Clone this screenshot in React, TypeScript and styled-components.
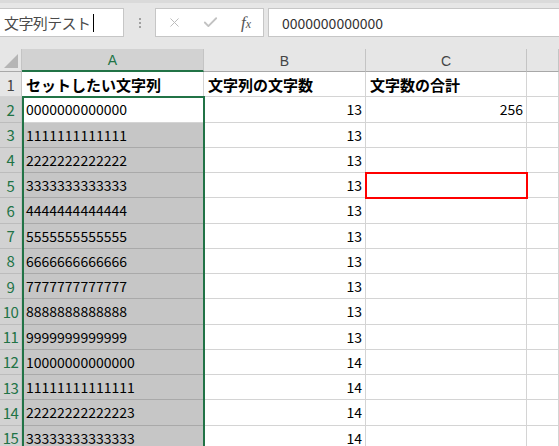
import React from 'react';
import styled, { createGlobalStyle } from 'styled-components';
import { X, Check } from 'lucide-react';

const GlobalStyle = createGlobalStyle`
    body {
        margin: 0;
        background: #ffffff;
        overflow: hidden;
        font-family: "Noto Sans CJK JP", "Noto Sans", sans-serif;
    }
`;

const ROW_H = 25.25;

const columnA = [
    '0000000000000',
    '1111111111111',
    '2222222222222',
    '3333333333333',
    '4444444444444',
    '5555555555555',
    '6666666666666',
    '7777777777777',
    '8888888888888',
    '9999999999999',
    '10000000000000',
    '11111111111111',
    '22222222222223',
    '33333333333333',
];

export default function App() {
    return (
        <Page>
            <GlobalStyle />
            <Toolbar>
                <NameBox>
                    文字列テスト<Caret />
                </NameBox>
                <Grip>
                    <Dot /><Dot /><Dot />
                </Grip>
                <ButtonBox>
                    <IconSlot><X size={15} strokeWidth={1.6} color="#bcbcbc" /></IconSlot>
                    <IconSlot><Check size={17} strokeWidth={2.6} color="#c2c2c2" /></IconSlot>
                    <IconSlot><Fx>f<sub>x</sub></Fx></IconSlot>
                </ButtonBox>
                <FormulaBar>0000000000000</FormulaBar>
            </Toolbar>

            <Sheet>
                <Corner><Triangle /></Corner>
                <ColHeader $selected>A</ColHeader>
                <ColHeader>B</ColHeader>
                <ColHeader>C</ColHeader>
                <ColHeader />

                <RowHeader>1</RowHeader>
                <Cell $bold>セットしたい文字列</Cell>
                <Cell $bold>文字列の文字数</Cell>
                <Cell $bold>文字数の合計</Cell>
                <Cell />

                {columnA.map((value, i) => (
                    <React.Fragment key={i}>
                        <RowHeader $selected>{i + 2}</RowHeader>
                        <Cell $inRange={i > 0}>{value}</Cell>
                        <Cell $right>{value.length}</Cell>
                        <Cell $right $marked={i === 3}>{i === 0 ? '256' : ''}</Cell>
                        <Cell />
                    </React.Fragment>
                ))}

                <Selection />
            </Sheet>
        </Page>
    );
}

const Page = styled.div`
    width: 559px;
    height: 446px;
    overflow: hidden;
    background: #ffffff;
`;

const Toolbar = styled.div`
    height: 49px;
    box-sizing: border-box;
    background: #e6e6e6;
    border-top: 3px solid #dadada;
    padding-top: 5px;
    display: flex;
    align-items: flex-start;
`;

const NameBox = styled.div`
    width: 125px;
    height: 29px;
    margin-left: -1px;
    box-sizing: border-box;
    background: #ffffff;
    border: 1px solid #c6c6c6;
    padding-left: 4px;
    display: flex;
    align-items: center;
    font-size: 15px;
    color: #4a4a4a;
    letter-spacing: -0.6px;
`;

const Caret = styled.span`
    display: inline-block;
    width: 1px;
    height: 18px;
    margin-left: 3px;
    background: #000000;
`;

const Grip = styled.div`
    width: 31px;
    height: 29px;
    display: flex;
    flex-direction: column;
    align-items: center;
    justify-content: center;
    gap: 2px;
`;

const Dot = styled.span`
    width: 2px;
    height: 2px;
    background: #a0a0a0;
`;

const ButtonBox = styled.div`
    width: 109px;
    height: 29px;
    box-sizing: border-box;
    background: #ffffff;
    border: 1px solid #c6c6c6;
    display: grid;
    grid-template-columns: repeat(3, 36px);
`;

const IconSlot = styled.div`
    display: flex;
    align-items: center;
    justify-content: center;
`;

const Fx = styled.span`
    font-family: "Liberation Serif", serif;
    font-style: italic;
    font-size: 17px;
    color: #555555;
    line-height: 1;

    sub {
        font-size: 12px;
        vertical-align: baseline;
        position: relative;
        top: 0px;
    }
`;

const FormulaBar = styled.div`
    flex: 1;
    height: 29px;
    margin-left: 4px;
    margin-right: -2px;
    box-sizing: border-box;
    background: #ffffff;
    border: 1px solid #c6c6c6;
    padding-left: 13px;
    display: flex;
    align-items: center;
    font-size: 14px;
    color: #333333;
`;

const Sheet = styled.div`
    position: relative;
    display: grid;
    grid-template-columns: 22px 182px 162px 161px 1fr;
    grid-template-rows: 23px repeat(15, ${ROW_H}px);
`;

const Corner = styled.div`
    position: relative;
    background: #e6e6e6;
    border-right: 1px solid #c4c4c4;
    border-bottom: 1px solid #a8a8a8;
    box-sizing: border-box;
`;

const Triangle = styled.div`
    position: absolute;
    right: 3px;
    bottom: 3px;
    width: 0;
    height: 0;
    border-left: 14px solid transparent;
    border-bottom: 14px solid #b5b5b5;
`;

const ColHeader = styled.div<{ $selected?: boolean }>`
    box-sizing: border-box;
    background: ${p => (p.$selected ? '#d2d2d2' : '#e6e6e6')};
    border-right: 1px solid #c4c4c4;
    border-bottom: ${p => (p.$selected ? '2px solid #217346' : '1px solid #a8a8a8')};
    color: ${p => (p.$selected ? '#217346' : '#444444')};
    display: flex;
    align-items: center;
    justify-content: center;
    font-family: "Liberation Sans", Arial, sans-serif;
    font-size: 14px;
    padding-top: 1px;
`;

const RowHeader = styled.div<{ $selected?: boolean }>`
    box-sizing: border-box;
    background: ${p => (p.$selected ? '#d2d2d2' : '#e6e6e6')};
    border-right: 1px solid #c4c4c4;
    border-bottom: 1px solid ${p => (p.$selected ? '#bcbcbc' : '#d4d4d4')};
    color: ${p => (p.$selected ? '#217346' : '#444444')};
    display: flex;
    align-items: center;
    justify-content: center;
    font-size: 15px;
    letter-spacing: -0.5px;
`;

const Cell = styled.div<{ $bold?: boolean; $right?: boolean; $inRange?: boolean; $marked?: boolean }>`
    position: relative;
    box-sizing: border-box;
    background: ${p => (p.$inRange ? '#c6c6c6' : '#ffffff')};
    border-right: 1px solid #d4d4d4;
    border-bottom: 1px solid ${p => (p.$inRange ? '#a9a9a9' : '#d4d4d4')};
    display: flex;
    align-items: center;
    justify-content: ${p => (p.$right ? 'flex-end' : 'flex-start')};
    padding: 0 3px 0 4px;
    font-size: ${p => (p.$bold ? '15px' : '14px')};
    font-weight: ${p => (p.$bold ? 700 : 400)};
    color: #000000;
    white-space: nowrap;
    overflow: hidden;
    ${p => p.$marked && `
        outline: 2px solid #ff0000;
        outline-offset: -1px;
        z-index: 2;
    `}
`;

const Selection = styled.div`
    position: absolute;
    left: 22px;
    top: 47px;
    width: 183px;
    height: 420px;
    box-sizing: border-box;
    border: 2px solid #217346;
    pointer-events: none;
    z-index: 3;
`;
